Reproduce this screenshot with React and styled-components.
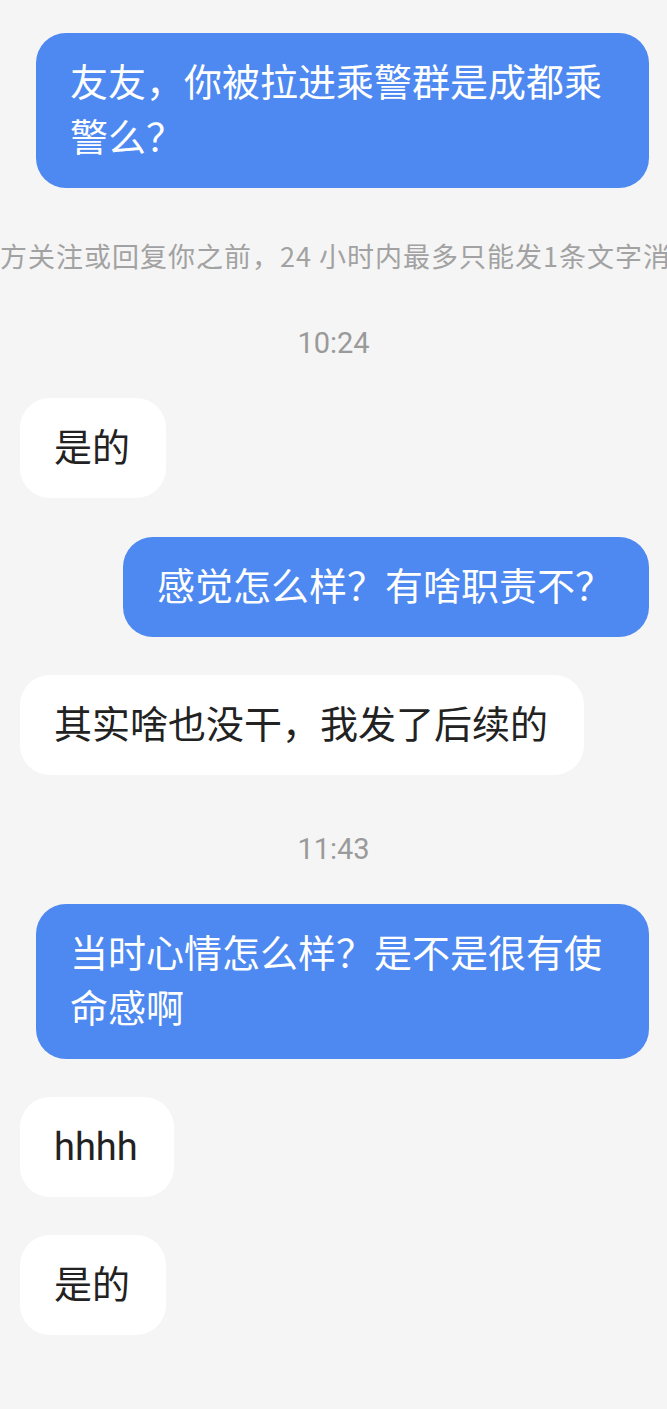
import React from "react";
import styled, { createGlobalStyle } from "styled-components";

const GlobalStyle = createGlobalStyle`
  html, body {
    margin: 0;
    padding: 0;
    background-color: #f5f5f5;
  }
  body {
    font-family: "Roboto", "Noto Sans CJK SC", sans-serif;
  }
`;

const Page = styled.div`
  display: flex;
  flex-direction: column;
  min-height: 1409px;
  padding: 33px 18px 0 20px;
  box-sizing: border-box;
  background-color: #f5f5f5;
  overflow: hidden;
`;

const Row = styled.div`
  display: flex;
  justify-content: ${(p) => (p.$mine ? "flex-end" : "flex-start")};
  margin-top: ${(p) => p.$top || 0}px;
`;

const Bubble = styled.div`
  max-width: 613px;
  box-sizing: border-box;
  padding: 23px 36px 22px 34px;
  border-radius: 30px;
  font-size: 38px;
  line-height: 55px;
  background-color: ${(p) => (p.$mine ? "#4d89f1" : "#ffffff")};
  color: ${(p) => (p.$mine ? "#ffffff" : "#222222")};
  word-break: break-all;
`;

const Notice = styled.div`
  display: flex;
  justify-content: center;
  margin: 50px -18px 0 -44px;
  font-family: "Noto Sans CJK SC", sans-serif;
  font-size: 27px;
  letter-spacing: 1px;
  line-height: 36px;
  color: #a2a2a2;
  white-space: nowrap;
  overflow: hidden;
`;

const Time = styled.div`
  text-align: center;
  margin-top: ${(p) => p.$top}px;
  margin-left: -2px;
  font-family: "Roboto", "Noto Sans", sans-serif;
  font-size: 29px;
  line-height: 36px;
  color: #9a9a9a;
`;

const messages = [
  { mine: true, text: "友友，你被拉进乘警群是成都乘警么？" },
  { notice: "在对方关注或回复你之前，24 小时内最多只能发1条文字消息" },
  { time: "10:24", top: 51 },
  { mine: false, text: "是的", top: 37 },
  { mine: true, text: "感觉怎么样？有啥职责不？", top: 39 },
  { mine: false, text: "其实啥也没干，我发了后续的", top: 38 },
  { time: "11:43", top: 56 },
  { mine: true, text: "当时心情怎么样？是不是很有使命感啊", top: 37 },
  { mine: false, text: "hhhh", top: 38 },
  { mine: false, text: "是的", top: 38 },
];

const App = () => {
  return (
    <>
      <GlobalStyle />
      <Page>
        {messages.map((m, i) => {
          if (m.notice) return <Notice key={i}>{m.notice}</Notice>;
          if (m.time)
            return (
              <Time key={i} $top={m.top}>
                {m.time}
              </Time>
            );
          return (
            <Row key={i} $mine={m.mine} $top={m.top}>
              <Bubble $mine={m.mine}>{m.text}</Bubble>
            </Row>
          );
        })}
      </Page>
    </>
  );
};

export default App;
